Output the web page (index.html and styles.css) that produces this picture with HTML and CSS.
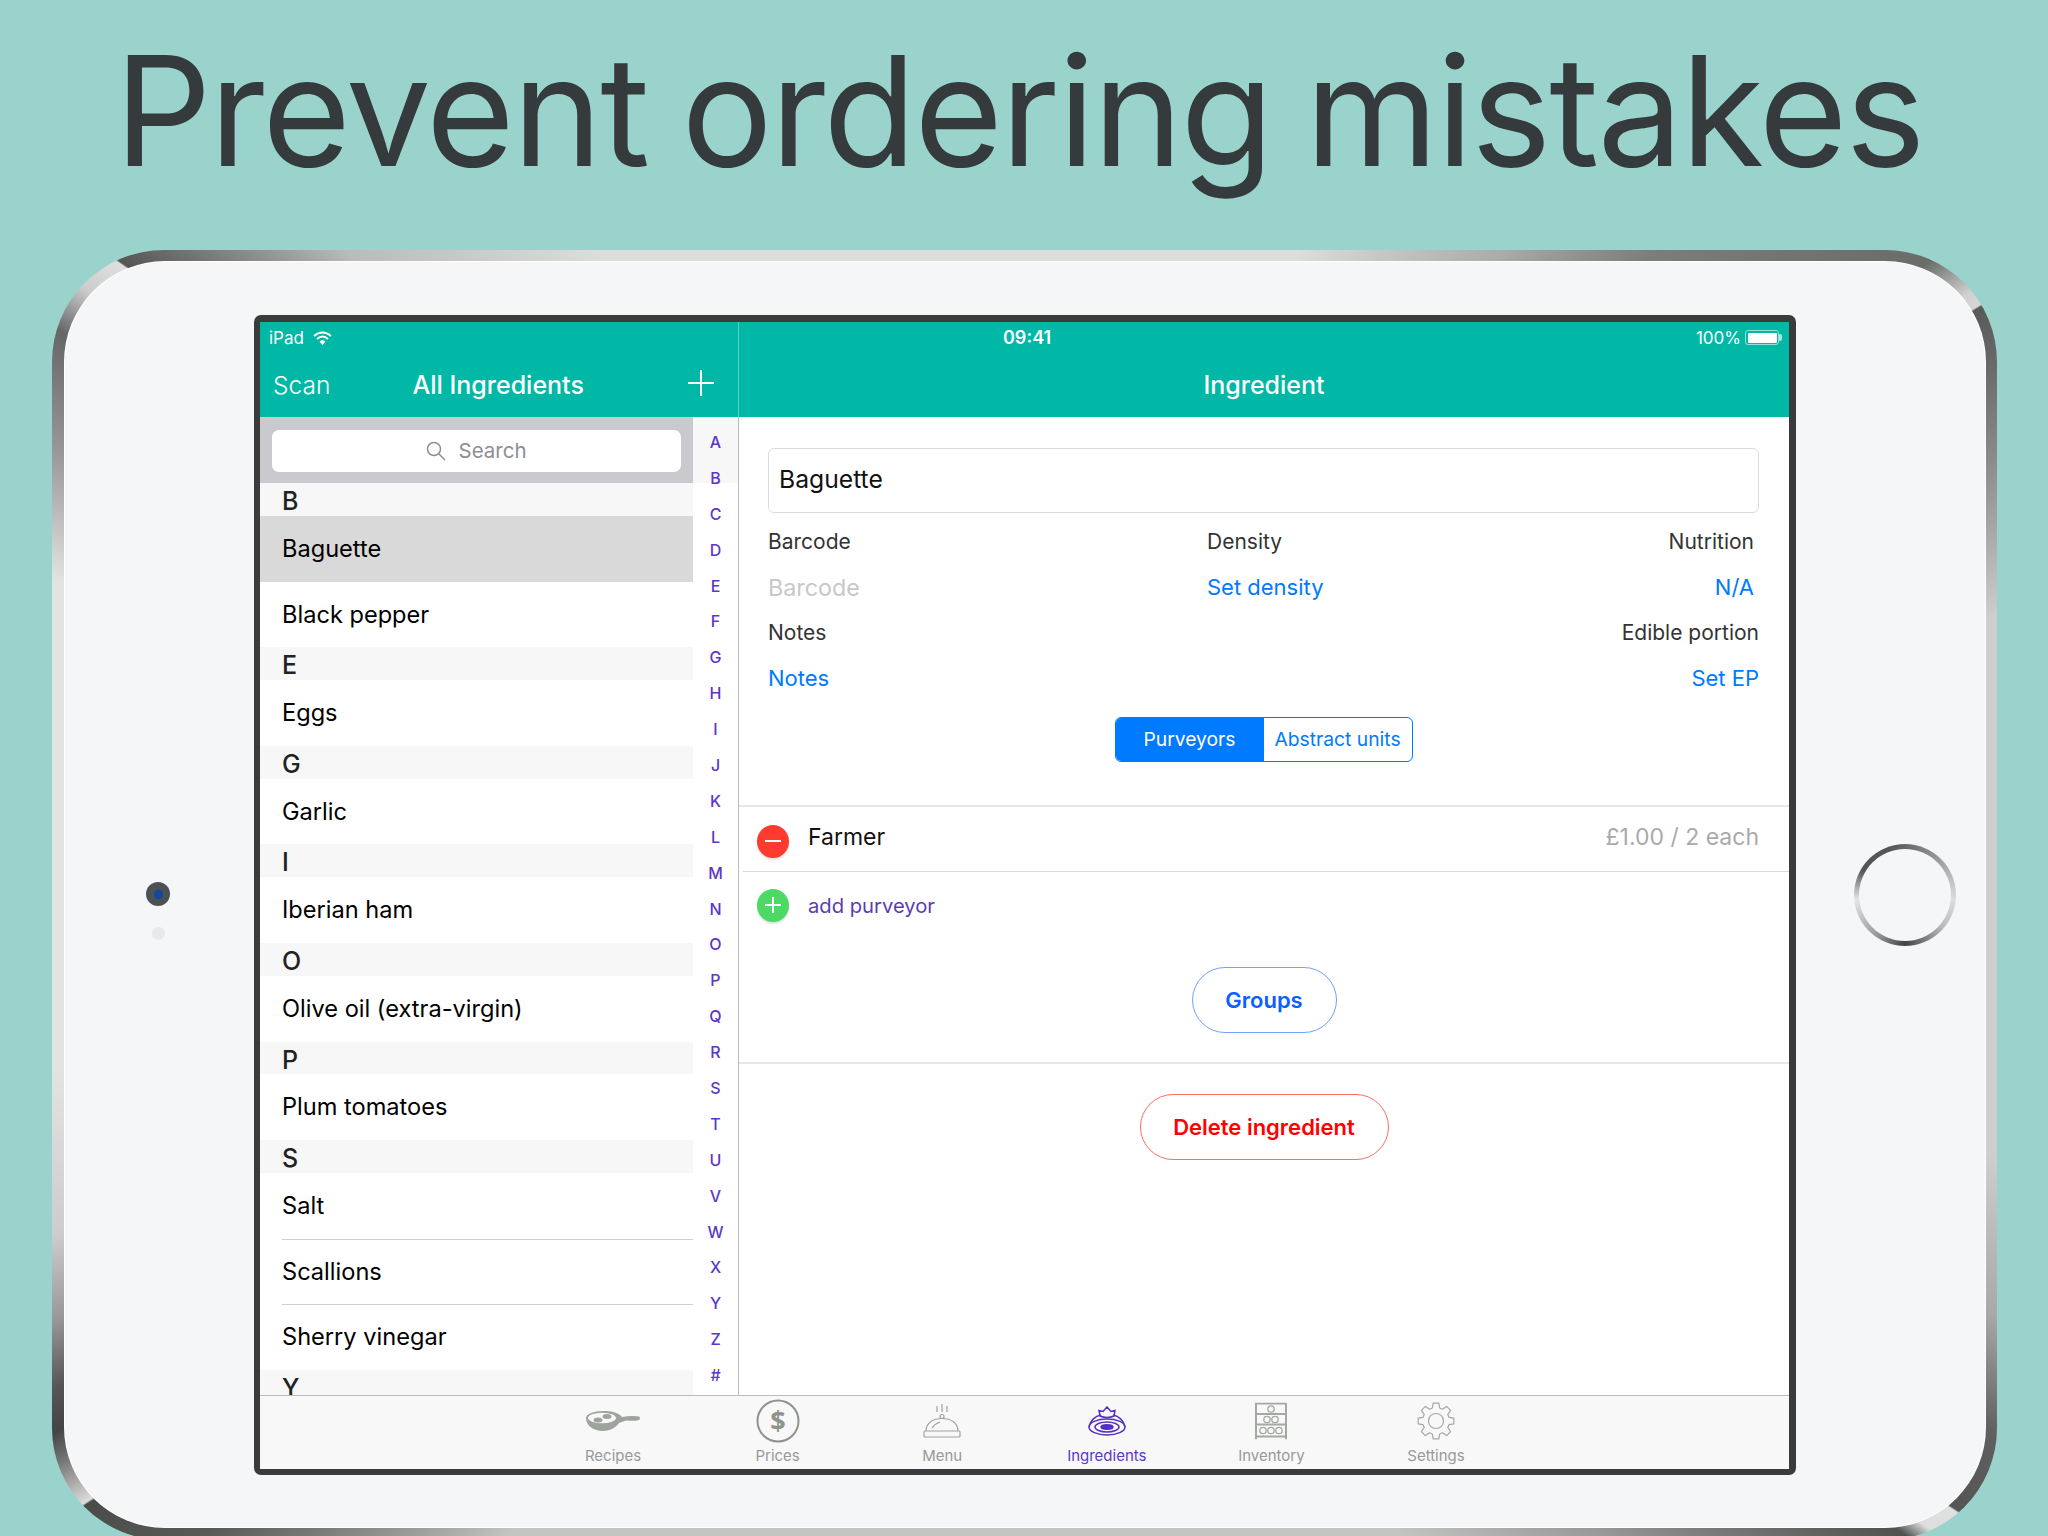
FILE: index.html
```html
<!DOCTYPE html>
<html lang="en">
<head>
  <meta charset="UTF-8" />
  <title>Prevent ordering mistakes</title>
  <link rel="stylesheet" href="styles.css">
</head>
<body>
  <h1 class="headline">Prevent ordering mistakes</h1>

  <div class="device">
    <div class="device-face">
      <div class="camera-side">
        <div class="camera"><span class="lens"></span></div>
        <div class="sensor"></div>
      </div>

      <div class="screen">
        <div class="top-bar">
          <div class="top-master">
            <div class="status status-master">
              <span>iPad</span>
              <svg class="wifi" viewBox="0 0 19 14" width="19" height="14">
                <path d="M1 5 Q9.5 -2 18 5" fill="none" stroke="#fff" stroke-width="1.8"/>
                <path d="M4 8 Q9.5 3 15 8" fill="none" stroke="#fff" stroke-width="1.8"/>
                <path d="M6.5 10.5 Q9.5 7.5 12.5 10.5 L9.5 14 Z" fill="#fff"/>
              </svg>
            </div>
            <div class="nav nav-master">
              <span class="nav-scan">Scan</span>
              <span class="nav-title nav-title-list">All Ingredients</span>
              <svg class="nav-plus" viewBox="0 0 26 26" width="26" height="26">
                <path d="M13 0 V26 M0 13 H26" stroke="#fff" stroke-width="2"/>
              </svg>
            </div>
          </div>
          <div class="top-detail">
            <div class="status status-detail">
              <span class="clock">09:41</span>
              <span class="battery-wrap">
                <span>100%</span>
                <span class="battery"><span class="battery-fill"></span></span>
              </span>
            </div>
            <div class="nav nav-detail">
              <span class="nav-title">Ingredient</span>
            </div>
          </div>
        </div>

        <div class="panes">
          <div class="master">
            <div class="list">
              <div class="search-strip">
                <div class="search-box">
                  <svg viewBox="0 0 20 20" width="20" height="20">
                    <circle cx="8" cy="8" r="6.5" fill="none" stroke="#8e8e93" stroke-width="1.5"/>
                    <path d="M13 13 L19 19" stroke="#8e8e93" stroke-width="1.5"/>
                  </svg>
                  <span class="search-text">Search</span>
                </div>
              </div>
              <div class="section">B</div>
              <div class="row selected">Baguette</div>
              <div class="row">Black pepper</div>
              <div class="section">E</div>
              <div class="row">Eggs</div>
              <div class="section">G</div>
              <div class="row">Garlic</div>
              <div class="section">I</div>
              <div class="row">Iberian ham</div>
              <div class="section">O</div>
              <div class="row">Olive oil (extra-virgin)</div>
              <div class="section">P</div>
              <div class="row">Plum tomatoes</div>
              <div class="section">S</div>
              <div class="row">Salt</div>
              <div class="row lined">Scallions</div>
              <div class="row lined">Sherry vinegar</div>
              <div class="section">Y</div>
            </div>
            <div class="az">
              <span>A</span><span>B</span><span>C</span><span>D</span><span>E</span><span>F</span><span>G</span>
              <span>H</span><span>I</span><span>J</span><span>K</span><span>L</span><span>M</span><span>N</span>
              <span>O</span><span>P</span><span>Q</span><span>R</span><span>S</span><span>T</span><span>U</span>
              <span>V</span><span>W</span><span>X</span><span>Y</span><span>Z</span><span>#</span>
            </div>
          </div>

          <div class="detail">
            <div class="form">
              <div class="name-field">Baguette</div>
              <div class="info-grid">
                <span class="label">Barcode</span>
                <span class="label">Density</span>
                <span class="label inset">Nutrition</span>
                <span class="placeholder">Barcode</span>
                <span class="link">Set density</span>
                <span class="link inset">N/A</span>
                <span class="label">Notes</span>
                <span></span>
                <span class="label">Edible portion</span>
                <span class="link">Notes</span>
                <span></span>
                <span class="link">Set EP</span>
              </div>
              <div class="segment">
                <span class="seg seg-on">Purveyors</span>
                <span class="seg">Abstract units</span>
              </div>
            </div>

            <div class="purveyors">
              <div class="pv-row">
                <span class="round-btn minus"><span class="bar"></span></span>
                <span class="pv-name">Farmer</span>
                <span class="pv-price">£1.00 / 2 each</span>
              </div>
              <div class="pv-row pv-add">
                <span class="round-btn plus">
                  <svg viewBox="0 0 16 16" width="16" height="16"><path d="M8 0 V16 M0 8 H16" stroke="#fff" stroke-width="2"/></svg>
                </span>
                <span class="pv-link">add purveyor</span>
              </div>
            </div>

            <div class="action action-groups">
              <span class="pill pill-blue">Groups</span>
            </div>
            <div class="action action-delete">
              <span class="pill pill-red">Delete ingredient</span>
            </div>
          </div>
        </div>

        <div class="tabs">
          <div class="tab">
            <svg viewBox="0 0 54 20" width="54" height="20">
              <path d="M0 7 C0 15 8 20 17 20 C25 20 30 16 33 12 L40 9.5 C45 10 50 10 53 9 Q55 7 53 5.500 C48 4.500 42 5 36 6 C32 1 25 0 17 0 C8 0 0 3 0 7 Z" fill="#9ea39d"/>
              <ellipse cx="16" cy="7" rx="14" ry="5.200" fill="#f8f8f8"/>
              <ellipse cx="12" cy="9" rx="4.500" ry="2.500" fill="#9ea39d"/>
              <ellipse cx="21" cy="5.500" rx="4.500" ry="2.500" fill="#9ea39d"/>
            </svg>
            <span>Recipes</span>
          </div>
          <div class="tab">
            <svg viewBox="0 0 44 44" width="44" height="44">
              <circle cx="22" cy="22" r="20.500" fill="none" stroke="#8f938e" stroke-width="2"/>
              <text x="22" y="31" text-anchor="middle" class="dollar">$</text>
            </svg>
            <span>Prices</span>
          </div>
          <div class="tab">
            <svg viewBox="0 0 38 34" width="38" height="34" fill="none" stroke="#9ea39d" stroke-width="1.200">
              <path d="M14 2 V8 M19 0 V8 M24 2 V8"/>
              <circle cx="19" cy="12.500" r="2"/>
              <path d="M3 27 C3 19 10 14.500 19 14.500 S35 19 35 27"/>
              <rect x="1" y="27" width="36" height="6" rx="1"/>
              <path d="M9 24 C11 21 14 19 17 18"/>
            </svg>
            <span>Menu</span>
          </div>
          <div class="tab tab-on">
            <svg viewBox="0 0 38 30" width="38" height="30" fill="none" stroke="#5530c0" stroke-width="1.500">
              <path d="M12 10 L11 4.500 L15 5.500 L19 1 L23 5.500 L27 4.500 L26 10 Q19 13 12 10 Z"/>
              <path d="M1 21 C2 15 7 10 13 9 M37 21 C36 15 31 10 25 9"/>
              <ellipse cx="19" cy="21" rx="18" ry="8"/>
              <ellipse cx="19" cy="21" rx="12" ry="5"/>
              <ellipse cx="19" cy="21" rx="6" ry="2.300" fill="#5530c0"/>
            </svg>
            <span>Ingredients</span>
          </div>
          <div class="tab">
            <svg viewBox="0 0 32 37" width="32" height="37" fill="none" stroke="#a3a8a2" stroke-width="2">
              <path d="M1 37 V1 H31 V37 M1 11.500 H31 M1 22 H31 M1 34 H31"/>
              <g stroke-width="1.300">
                <circle cx="16" cy="6.500" r="3.200"/>
                <circle cx="12" cy="17" r="3.200"/>
                <circle cx="20" cy="17" r="3.200"/>
                <circle cx="8" cy="28" r="3.200"/>
                <circle cx="16" cy="28" r="3.200"/>
                <circle cx="24" cy="28" r="3.200"/>
              </g>
            </svg>
            <span>Inventory</span>
          </div>
          <div class="tab">
            <svg viewBox="-19 -19 38 38" width="38" height="38" fill="none" stroke="#a3a8a2" stroke-width="1.200" stroke-linejoin="round">
              <polygon points="-3.700,-13 -2.800,-17.800 2.800,-17.800 3.700,-13 6.500,-11.800 10.600,-14.600 14.600,-10.600 11.800,-6.500 13,-3.700 17.800,-2.800 17.800,2.800 13,3.700 11.800,6.500 14.600,10.600 10.600,14.600 6.500,11.800 3.700,13 2.800,17.800 -2.800,17.800 -3.700,13 -6.500,11.800 -10.600,14.600 -14.600,10.600 -11.800,6.500 -13,3.700 -17.800,2.800 -17.800,-2.800 -13,-3.700 -11.800,-6.500 -14.600,-10.600 -10.600,-14.600 -6.500,-11.800"/>
              <circle r="7.500"/>
            </svg>
            <span>Settings</span>
          </div>
        </div>
      </div>

      <div class="home-side">
        <div class="home-ring"><div class="home-hole"></div></div>
      </div>
    </div>
  </div>
</body>
</html>
```

FILE: styles.css
```css
* {
  box-sizing: border-box;
}

body {
  margin: 0;
  width: 2048px;
  height: 1536px;
  overflow: hidden;
  background-color: #9ad3cb;
  font-family: 'Inter', 'Liberation Sans', sans-serif;
}

.headline {
  margin: 0;
  height: 250px;
  padding: 19px 10px 0 0;
  text-align: center;
  font-size: 152px;
  line-height: 184px;
  font-weight: 400;
  letter-spacing: -2.100px;
  word-spacing: -7px;
  color: #353b3c;
}

/* device body */
.device {
  width: 1945px;
  height: 1290px;
  margin-left: 52px;
  padding: 12px 12px 13px 13px;
  border-radius: 112px;
  background: conic-gradient(
    #dcdedc 0deg, #dcdedc 23deg, #aaacaa 36.6deg, #7c7e7c 44.3deg, #6a6c6a 55deg,
    #cfd0cf 57.5deg, #d5d6d5 58.3deg, #585a58 58.4deg, #666 60.8deg, #999 67.6deg,
    #cdcecd 74deg, #cdcecd 105deg, #a8a8a8 113.5deg, #606060 119deg, #555 123.4deg,
    #e0e0e0 123.5deg, #ddd 125deg, #505250 126deg, #999 138deg, #c2c4c2 149.6deg,
    #c2c4c2 219deg, #585a58 232deg, #4a4c4a 237deg, #ddd 237.1deg, #777 239.5deg,
    #444 241deg, #555 243deg, #999 246.4deg, #ccc 250.6deg, #e2e4e2 259.7deg, #e2e4e2 288deg,
    #999 294.5deg, #666 300.3deg, #ccc 302.8deg, #e0e0e0 304.9deg, #555 305deg,
    #bbb 313.5deg, #dcdedc 326.5deg, #dcdedc 360deg
  );
}

.device-face {
  display: flex;
  height: 100%;
  padding: 53px 0 52px;
  border-radius: 100px;
  background-color: #f5f6f8;
  box-shadow: 0 0 0 1px #fff;
}

.camera-side {
  width: 189px;
  padding-left: 81px;
  padding-top: 567px;
  display: flex;
  flex-direction: column;
}

.camera {
  width: 24px;
  height: 24px;
  border-radius: 50%;
  background-color: #4c5155;
  display: flex;
  align-items: center;
  justify-content: center;
}

.lens {
  width: 9px;
  height: 9px;
  border-radius: 50%;
  background-color: #12479c;
}

.sensor {
  width: 13px;
  height: 13px;
  margin: 21px 0 0 6px;
  border-radius: 50%;
  background-color: #e8e9eb;
}

.home-side {
  width: 189px;
  padding-left: 58px;
  display: flex;
  align-items: center;
}

.home-ring {
  width: 102px;
  height: 102px;
  padding: 5px;
  border-radius: 50%;
  background: conic-gradient(#666 0deg, #aaa 55deg, #ddd 95deg, #bbb 130deg, #444 180deg, #999 215deg, #e6e6e6 265deg, #555 300deg, #555 340deg, #666 360deg);
}

.home-hole {
  width: 100%;
  height: 100%;
  border-radius: 50%;
  background-color: #f5f6f8;
}

/* screen */
.screen {
  width: 1542px;
  display: flex;
  flex-direction: column;
  border: solid #3a3c3c;
  border-width: 7px 7px 6px 6px;
  border-radius: 7px;
  background-color: #fff;
  overflow: hidden;
}

.top-bar {
  display: flex;
  height: 95px;
  background-color: #00b8a5;
  color: #fff;
}

.top-master {
  width: 479px;
  border-right: 1px solid #5fd0c4;
}

.top-detail {
  flex: 1;
}

.status {
  height: 31px;
  font-size: 17px;
  display: flex;
  align-items: center;
}

.status-master {
  padding-left: 9px;
  gap: 9px;
}

.wifi {
  display: block;
}

.status-detail {
  justify-content: flex-end;
  padding-right: 7px;
  position: relative;
}

.clock {
  position: absolute;
  left: 264px;
  font-size: 18px;
  font-weight: 600;
}

.battery-wrap {
  display: flex;
  align-items: center;
  gap: 4px;
}

.battery {
  position: relative;
  width: 34px;
  height: 15px;
  margin-right: 3px;
  padding: 1.500px;
  border: 1px solid #8fe0d6;
  border-radius: 3px;
  display: block;
}

.battery::after {
  content: "";
  position: absolute;
  top: 3px;
  right: -4px;
  width: 3px;
  height: 7px;
  border-radius: 0 2px 2px 0;
  background-color: #a6e6de;
}

.battery-fill {
  display: block;
  height: 100%;
  background-color: #fff;
  border-radius: 1px;
}

.nav {
  height: 64px;
  font-size: 25px;
  display: flex;
  align-items: center;
}

.nav-master {
  padding: 0 24px 0 13px;
  justify-content: space-between;
}

.nav-scan {
  font-size: 24.500px;
  font-weight: 300;
}

.nav-title {
  font-weight: 500;
}

.nav-title-list {
  margin-right: 22px;
}

.nav-detail {
  justify-content: center;
}

.nav-plus {
  margin-top: -5px;
}

.panes {
  display: flex;
  flex: 1;
  min-height: 0;
}

/* ingredient list */
.master {
  width: 479px;
  display: flex;
  border-right: 1px solid #bbb;
}

.list {
  width: 433px;
  overflow: hidden;
}

.search-strip {
  height: 66px;
  padding: 13px 12px 11px;
  background-color: #c9c9ce;
}

.search-box {
  height: 42px;
  border-radius: 7px;
  background-color: #fff;
  color: #8e8e93;
  font-size: 20.500px;
  display: flex;
  align-items: center;
  justify-content: center;
  gap: 12px;
}

.search-text {
  margin-bottom: 2px;
}

.section {
  height: 32.900px;
  padding-left: 22px;
  background-color: #f7f7f7;
  font-size: 25px;
  line-height: 37px;
  font-weight: 500;
  color: #222;
  overflow: hidden;
}

.row {
  height: 65.700px;
  padding-left: 22px;
  font-size: 23.600px;
  line-height: 65px;
  color: #000;
  position: relative;
}

.row.selected {
  background-color: #d9d9d9;
}

.row.lined::before {
  content: "";
  position: absolute;
  top: 0;
  left: 22px;
  right: 0;
  height: 1px;
  background-color: #d0d0d0;
}

.az {
  width: 45px;
  padding-top: 7px;
  background: linear-gradient(#f7f7f7 66px, #fff 66px);
  display: flex;
  flex-direction: column;
  align-items: center;
}

.az span {
  height: 35.900px;
  line-height: 36px;
  font-size: 16px;
  font-weight: 500;
  color: #5b37c8;
}

/* detail pane */
.detail {
  flex: 1;
}

.form {
  height: 390px;
  padding: 31px 30px 0 29px;
  border-bottom: 2px solid #e6e6e6;
}

.name-field {
  height: 65px;
  padding-left: 10px;
  border: 1px solid #dcdcdc;
  border-radius: 6px;
  font-size: 24.700px;
  line-height: 60px;
  color: #111;
}

.info-grid {
  display: grid;
  grid-template-columns: 439px 1fr auto;
  grid-auto-rows: 45.500px;
  margin-top: 6px;
  align-items: center;
}

.info-grid .inset {
  margin-right: 5px;
  justify-self: end;
}

.info-grid > :nth-child(3n) {
  justify-self: end;
}

.label {
  font-size: 21px;
  color: #333;
}

.placeholder {
  font-size: 23.300px;
  color: #c7c7cd;
}

.link {
  font-size: 22px;
  color: #007aff;
}

.segment {
  display: flex;
  width: 298px;
  height: 45px;
  margin: 16px auto 0;
  border: 1.500px solid #007aff;
  border-radius: 6px;
  overflow: hidden;
}

.seg {
  flex: 1;
  font-size: 19.300px;
  line-height: 42px;
  text-align: center;
  color: #007aff;
  white-space: nowrap;
}

.seg-on {
  flex: 0 0 148px;
  background-color: #007aff;
  color: #fff;
}

.pv-row {
  display: flex;
  align-items: center;
  height: 66px;
  padding: 0 30px 0 18px;
}

.purveyors .pv-row:first-child {
  position: relative;
  height: 65px;
  border-bottom: 1px solid #d9d9d9;
  margin-left: 4px;
  padding-left: 14px;
}

.round-btn {
  width: 32px;
  height: 33px;
  border-radius: 50%;
  box-shadow: 0 2px 2px rgba(0, 0, 0, 0.12);
  display: flex;
  align-items: center;
  justify-content: center;
  flex-shrink: 0;
}

.minus {
  background-color: #ff3b30;
  margin-top: 4px;
}

.bar {
  width: 16px;
  height: 2px;
  background-color: #fff;
}

.plus {
  background-color: #4cd964;
}

.pv-name {
  margin-left: 19px;
  margin-top: -4px;
  font-size: 23px;
  color: #111;
}

.pv-price {
  margin-left: auto;
  margin-top: -4px;
  font-size: 23px;
  color: #aaa;
}

.pv-link {
  margin-left: 19px;
  font-size: 20.200px;
  color: #5a3eb0;
}

.action {
  display: flex;
  justify-content: center;
}

.action-groups {
  height: 126px;
  padding-top: 29px;
  border-bottom: 2px solid #e6e6e6;
}

.action-delete {
  padding-top: 30px;
}

.pill {
  height: 66px;
  border: 1px solid;
  border-radius: 33px;
  font-size: 22px;
  font-weight: 600;
  display: flex;
  align-items: center;
  justify-content: center;
}

.pill-blue {
  width: 145px;
  border-color: #6ea2ff;
  color: #0a60ff;
}

.pill-red {
  width: 249px;
  border-color: #ff6b6b;
  color: #ff0000;
}

/* tab bar */
.tabs {
  height: 74px;
  border-top: 1px solid #bbb;
  background-color: #f8f8f8;
  display: flex;
  justify-content: center;
}

.tab {
  width: 164.600px;
  height: 73px;
  display: flex;
  flex-direction: column;
  align-items: center;
  justify-content: flex-end;
  font-size: 15px;
  color: #999;
  position: relative;
  padding-bottom: 4px;
}

.tab svg {
  position: absolute;
  top: 25px;
  transform: translateY(-50%);
}

.tab-on {
  color: #5b37c8;
}

.dollar {
  font-family: 'Open Sans', sans-serif;
  font-size: 27px;
  font-weight: 700;
  fill: #8f938e;
}
```
